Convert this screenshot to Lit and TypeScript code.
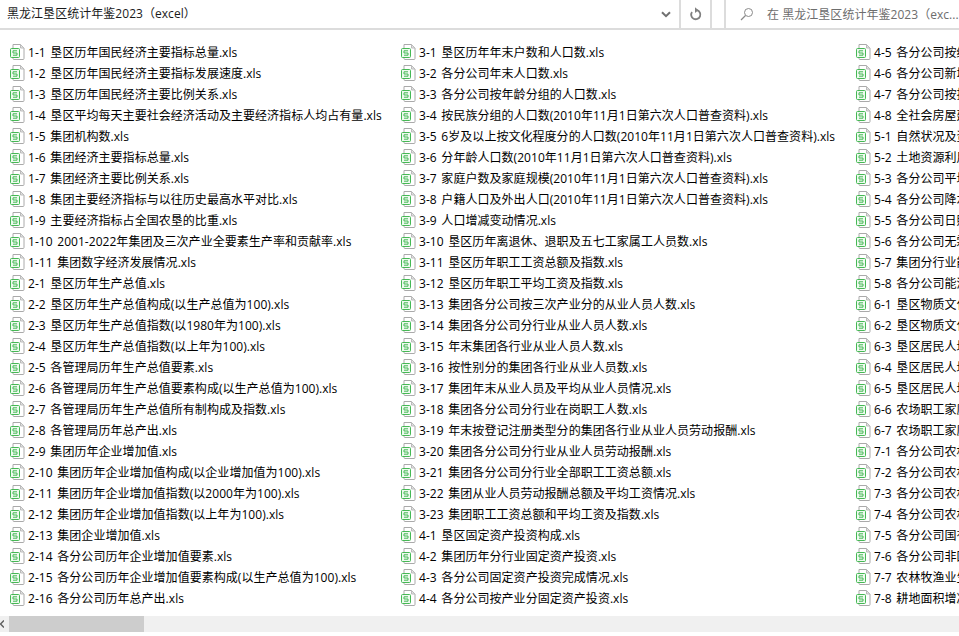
import { LitElement, html, css, svg } from "lit";
import { customElement } from "lit/decorators.js";

const col1 = ["1-1 垦区历年国民经济主要指标总量.xls","1-2 垦区历年国民经济主要指标发展速度.xls","1-3 垦区历年国民经济主要比例关系.xls","1-4 垦区平均每天主要社会经济活动及主要经济指标人均占有量.xls","1-5 集团机构数.xls","1-6 集团经济主要指标总量.xls","1-7 集团经济主要比例关系.xls","1-8 集团主要经济指标与以往历史最高水平对比.xls","1-9 主要经济指标占全国农垦的比重.xls","1-10 2001-2022年集团及三次产业全要素生产率和贡献率.xls","1-11 集团数字经济发展情况.xls","2-1 垦区历年生产总值.xls","2-2 垦区历年生产总值构成(以生产总值为100).xls","2-3 垦区历年生产总值指数(以1980年为100).xls","2-4 垦区历年生产总值指数(以上年为100).xls","2-5 各管理局历年生产总值要素.xls","2-6 各管理局历年生产总值要素构成(以生产总值为100).xls","2-7 各管理局历年生产总值所有制构成及指数.xls","2-8 各管理局历年总产出.xls","2-9 集团历年企业增加值.xls","2-10 集团历年企业增加值构成(以企业增加值为100).xls","2-11 集团历年企业增加值指数(以2000年为100).xls","2-12 集团历年企业增加值指数(以上年为100).xls","2-13 集团企业增加值.xls","2-14 各分公司历年企业增加值要素.xls","2-15 各分公司历年企业增加值要素构成(以生产总值为100).xls","2-16 各分公司历年总产出.xls"];
const col2 = ["3-1 垦区历年年末户数和人口数.xls","3-2 各分公司年末人口数.xls","3-3 各分公司按年龄分组的人口数.xls","3-4 按民族分组的人口数(2010年11月1日第六次人口普查资料).xls","3-5 6岁及以上按文化程度分的人口数(2010年11月1日第六次人口普查资料).xls","3-6 分年龄人口数(2010年11月1日第六次人口普查资料).xls","3-7 家庭户数及家庭规模(2010年11月1日第六次人口普查资料).xls","3-8 户籍人口及外出人口(2010年11月1日第六次人口普查资料).xls","3-9 人口增减变动情况.xls","3-10 垦区历年离退休、退职及五七工家属工人员数.xls","3-11 垦区历年职工工资总额及指数.xls","3-12 垦区历年职工平均工资及指数.xls","3-13 集团各分公司按三次产业分的从业人员人数.xls","3-14 集团各分公司分行业从业人员人数.xls","3-15 年末集团各行业从业人员人数.xls","3-16 按性别分的集团各行业从业人员数.xls","3-17 集团年末从业人员及平均从业人员情况.xls","3-18 集团各分公司分行业在岗职工人数.xls","3-19 年末按登记注册类型分的集团各行业从业人员劳动报酬.xls","3-20 集团各分公司分行业从业人员劳动报酬.xls","3-21 集团各分公司分行业全部职工工资总额.xls","3-22 集团从业人员劳动报酬总额及平均工资情况.xls","3-23 集团职工工资总额和平均工资及指数.xls","4-1 垦区固定资产投资构成.xls","4-2 集团历年分行业固定资产投资.xls","4-3 各分公司固定资产投资完成情况.xls","4-4 各分公司按产业分固定资产投资.xls"];
const col3 = ["4-5 各分公司按经济类型分.xls","4-6 各分公司新增固定资产.xls","4-7 各分公司按投资.xls","4-8 全社会房屋建筑.xls","5-1 自然状况及资源.xls","5-2 土地资源利用.xls","5-3 各分公司平均.xls","5-4 各分公司降水.xls","5-5 各分公司日照.xls","5-6 各分公司无霜.xls","5-7 集团分行业能源.xls","5-8 各分公司能源.xls","6-1 垦区物质文化.xls","6-2 垦区物质文化.xls","6-3 垦区居民人均.xls","6-4 垦区居民人均.xls","6-5 垦区居民人均.xls","6-6 农场职工家庭.xls","6-7 农场职工家庭.xls","7-1 各分公司农林.xls","7-2 各分公司农林.xls","7-3 各分公司农林.xls","7-4 各分公司农林.xls","7-5 各分公司国有.xls","7-6 各分公司非国有.xls","7-7 农林牧渔业生产.xls","7-8 耕地面积增减.xls"];

const icon = svg`<svg class="ic" width="16" height="17" viewBox="0 0 16 17"><path d="M4 1.5H11.5L15 5V15.5Q15 16.5 14 16.5H5Q4 16.5 4 15.5Z" fill="#fff" stroke="#aaa"/><path d="M11.5 1.5V5H15Z" fill="#e2e2e2" stroke="#bbb"/><rect x="1.5" y="5.5" width="9" height="9" rx="1" fill="#eefaef" stroke="#45b854"/><path d="M8 7.8H4V10H8V12.2H4" fill="none" stroke="#45b854"/></svg>`;

@customElement("app-root")
export class AppRoot extends LitElement {
  static styles = css`
    :host { display: block; width: 959px; height: 636px; overflow: hidden; background: #fff;
      font-family: "Open Sans", "Noto Sans CJK SC", sans-serif; font-size: 12px; color: #000; letter-spacing: .04px; word-spacing: 1.5px; }
    .top { display: flex; height: 28px; border-bottom: 2px solid #dcdcdc; }
    .path { flex: 0 0 681px; display: flex; align-items: center; box-sizing: border-box; padding-left: 7px; color: #1a1a1a; border-right: 2px solid #dcdcdc; }
    .title { flex: 1; margin-top: -2px; }
    .chev { width: 26px; height: 100%; display: flex; align-items: center; justify-content: center; }
    .gap { flex: 0 0 12px; }
    .btns { display: flex; flex: 0 0 31px; align-items: center; justify-content: center; border-right: 2px solid #dcdcdc; box-sizing: border-box; }
    .search { flex: 1; min-width: 0; display: flex; align-items: center; border-left: 2px solid #dcdcdc; padding-left: 14px; color: #6d6d6d; gap: 13px; white-space: nowrap; overflow: hidden; word-spacing: 0; }
    .search svg { flex: none; }
    .files { display: flex; height: 586px; padding-top: 12px; box-sizing: border-box; overflow: hidden; }
    .col { flex: none; display: flex; flex-direction: column; box-sizing: border-box; }
    .c1 { width: 400px; padding-left: 9px; }
    .c2 { width: 455px; }
    .c3 { width: 104px; overflow: hidden; }
    .row { height: 21px; display: flex; align-items: center; gap: 3px; white-space: nowrap; line-height: 21px; }
    .ic { flex: none; margin-bottom: 2px; }
    .bar { height: 16px; background: #f0f0f0; display: flex; }
    .arrow { width: 9px; display: flex; align-items: center; }
    .thumb { width: 135px; background: #cdcdcd; }
  `;
  renderCol(cls: string, items: string[]) {
    return html`<div class="col ${cls}">${items.map((t) => html`<div class="row">${icon}<span>${t}</span></div>`)}</div>`;
  }
  render() {
    return html`
      <div class="top">
        <div class="path"><span class="title">黑龙江垦区统计年鉴2023（excel）</span>
          <div class="chev"><svg width="10" height="7" viewBox="0 0 10 7"><path d="M1 1.2L5 5.2L9 1.2" fill="none" stroke="#707070" stroke-width="2"/></svg></div>
        </div>
        <div class="btns"><svg width="14" height="14" viewBox="0 0 14 14"><path d="M8 3.2A4.6 4.6 0 1 1 3 5" fill="none" stroke="#808080" stroke-width="1.8"/><path d="M6 .3L9.5 3.2L6 6Z" fill="#808080"/></svg></div>
        <div class="gap"></div>
        <div class="search"><svg width="14" height="14" viewBox="0 0 14 14"><circle cx="8.5" cy="5.5" r="4" fill="none" stroke="#8a8a8a"/><path d="M5.5 8.5L1 13" stroke="#8a8a8a" stroke-width="1.2"/></svg><span>在 黑龙江垦区统计年鉴2023（exc...</span></div>
      </div>
      <div class="files">${this.renderCol("c1", col1)}${this.renderCol("c2", col2)}${this.renderCol("c3", col3)}</div>
      <div class="bar"><div class="arrow"><svg width="4" height="8" viewBox="0 0 4 8"><path d="M4 0.5L0.5 4L4 7.5" fill="none" stroke="#606060" stroke-width="1.5"/></svg></div><div class="thumb"></div></div>
    `;
  }
}
